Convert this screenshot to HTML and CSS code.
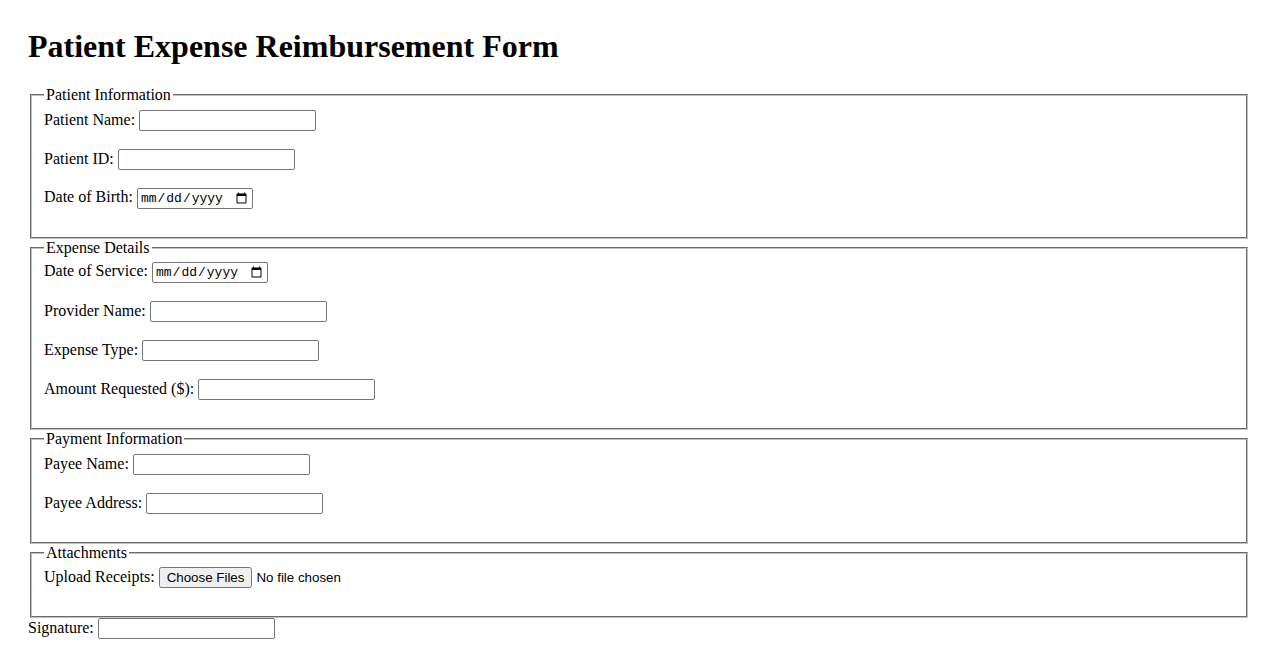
FILE: index.html
```html
<!DOCTYPE html>
<html lang="en">
<head>
<meta charset="utf-8">
<title>Patient Expense Reimbursement Form</title>
<link rel="stylesheet" href="styles.css">
</head>
<body>
<h1 class="title">Patient Expense Reimbursement Form</h1>
<form class="form">
  <fieldset class="section">
    <legend class="legend">Patient Information</legend>
    <div class="row"><label for="pname">Patient Name:</label> <input class="text" type="text" id="pname"></div>
    <div class="row"><label for="pid">Patient ID:</label> <input class="text" type="text" id="pid"></div>
    <div class="row"><label for="dob">Date of Birth:</label> <input class="date" type="date" id="dob"></div>
  </fieldset>
  <fieldset class="section">
    <legend class="legend">Expense Details</legend>
    <div class="row"><label for="dos">Date of Service:</label> <input class="date" type="date" id="dos"></div>
    <div class="row"><label for="prov">Provider Name:</label> <input class="text" type="text" id="prov"></div>
    <div class="row"><label for="etype">Expense Type:</label> <input class="text" type="text" id="etype"></div>
    <div class="row"><label for="amt">Amount Requested ($):</label> <input class="text" type="text" id="amt"></div>
  </fieldset>
  <fieldset class="section">
    <legend class="legend">Payment Information</legend>
    <div class="row"><label for="payee">Payee Name:</label> <input class="text" type="text" id="payee"></div>
    <div class="row"><label for="addr">Payee Address:</label> <input class="text" type="text" id="addr"></div>
  </fieldset>
  <fieldset class="section">
    <legend class="legend">Attachments</legend>
    <div class="row"><label for="rec">Upload Receipts:</label> <input class="file" type="file" id="rec" multiple></div>
  </fieldset>
  <div class="row last"><label for="sig">Signature:</label> <input class="text" type="text" id="sig"></div>
</form>
</body>
</html>
```
FILE: styles.css
```css
body {
  margin: 28px;
  font-family: "Liberation Serif", "Times New Roman", serif;
  font-size: 16px;
  color: #000;
  background: #fff;
}
.title {
  font-size: 32px;
  font-weight: bold;
  line-height: 37px;
  margin: 0 0 21px;
}
.form {
  margin: 0;
}
.section {
  margin: 0 2px;
  padding: 0.35em 0.75em 0.625em;
  border: 2px groove rgb(192, 192, 192);
}
.legend {
  padding: 0 2px;
}
.row {
  min-height: 23px;
  margin-bottom: 16px;
}
.row.last {
  margin-bottom: 0;
}
input {
  font-family: "Liberation Sans", Arial, sans-serif;
  font-size: 13.333px;
}
.text {
  box-sizing: border-box;
  width: 177px;
  height: 21px;
  padding: 1px 2px;
  border: 1px solid #767676;
  border-radius: 2px;
}
.date {
  box-sizing: border-box;
  width: 116px;
  height: 21px;
  padding: 1px 2px;
  border: 1px solid #767676;
  border-radius: 2px;
  font-family: "Liberation Mono", "DejaVu Sans Mono", monospace;
  font-size: 13px;
}
```
